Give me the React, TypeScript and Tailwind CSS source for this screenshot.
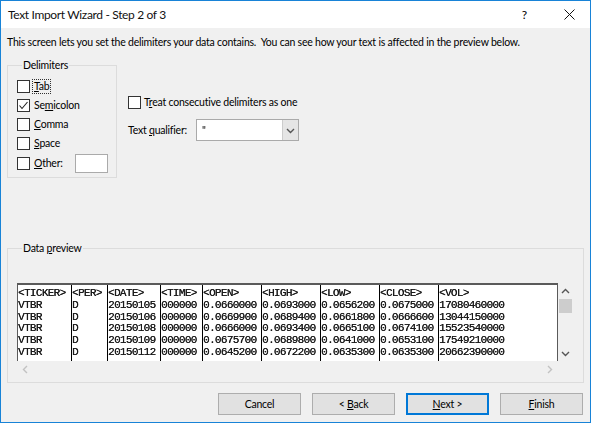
import React from "react";

const rows = [
  ["<TICKER>", "<PER>", "<DATE>", "<TIME>", "<OPEN>", "<HIGH>", "<LOW>", "<CLOSE>", "<VOL>"],
  ["VTBR", "D", "20150105", "000000", "0.0660000", "0.0693000", "0.0656200", "0.0675000", "17080460000"],
  ["VTBR", "D", "20150106", "000000", "0.0669900", "0.0689400", "0.0661800", "0.0666600", "13044150000"],
  ["VTBR", "D", "20150108", "000000", "0.0666000", "0.0693400", "0.0665100", "0.0674100", "15523540000"],
  ["VTBR", "D", "20150109", "000000", "0.0675700", "0.0689800", "0.0641000", "0.0653100", "17549210000"],
  ["VTBR", "D", "20150112", "000000", "0.0645200", "0.0672200", "0.0635300", "0.0635300", "20662390000"],
];

const colClasses = [
  "w-[53px]",
  "w-[36px]",
  "w-[53px]",
  "w-[42px]",
  "w-[59px]",
  "w-[59px]",
  "w-[59px]",
  "w-[59px]",
  "flex-1",
];

function Check({ checked = false }: { checked?: boolean }) {
  return (
    <span className="w-[13px] h-[13px] border border-[#333] bg-white flex items-center justify-center shrink-0">
      {checked && (
        <svg width="11" height="11" viewBox="0 0 11 11">
          <polyline points="1.5,5.5 4,8.5 9.5,2" fill="none" stroke="#222" strokeWidth="1.1" />
        </svg>
      )}
    </span>
  );
}

function Chevron({ dir, color }: { dir: "up" | "down" | "left" | "right"; color: string }) {
  const pts = {
    up: "1,6 4.5,2.5 8,6",
    down: "1,3 4.5,6.5 8,3",
    left: "6,1 2.5,4.5 6,8",
    right: "3,1 6.5,4.5 3,8",
  }[dir];
  return (
    <svg width="9" height="9" viewBox="0 0 9 9">
      <polyline points={pts} fill="none" stroke={color} strokeWidth="1.4" />
    </svg>
  );
}

function Btn({ children, primary = false }: { children: React.ReactNode; primary?: boolean }) {
  return (
    <button
      className={
        primary
          ? "w-[83px] h-[22px] bg-[#e1e1e1] border-2 border-[#0078d7] text-black flex items-center justify-center"
          : "w-[83px] h-[22px] bg-[#e1e1e1] border border-[#adadad] text-black flex items-center justify-center"
      }
    >
      <span className="whitespace-pre">{children}</span>
    </button>
  );
}

export default function App() {
  return (
    <div className="w-[591px] h-[423px] border border-[#1883d7] bg-[#f0f0f0] flex flex-col overflow-hidden font-['Lato','Noto_Sans',sans-serif] text-[10.5px] tracking-[-0.22px] text-black leading-[15px]">
      <div className="h-[27px] bg-white flex items-center pl-[7px] pr-[15px] shrink-0">
        <span className="text-[12px] tracking-[-0.35px] text-[#111]">Text Import Wizard - Step 2 of 3</span>
        <span className="ml-auto text-[12px] mr-[37px]">?</span>
        <svg width="11" height="11" viewBox="0 0 11 11">
          <path d="M0.5 0.5 L10.5 10.5 M10.5 0.5 L0.5 10.5" stroke="#111" strokeWidth="1" />
        </svg>
      </div>

      <p className="mt-[7px] ml-[6px] whitespace-nowrap">
        This screen lets you set the delimiters your data contains.&nbsp; You can see how your text is affected in the preview below.
      </p>

      <div className="flex mt-[8px] ml-[6px]">
        <fieldset className="w-[110px] h-[120px] border border-[#dcdcdc] pl-[9px] pt-[4px]">
          <legend className="ml-[5px] px-[1px]">Delimiters</legend>
          <div className="flex flex-col">
            <label className="h-[19px] flex items-center gap-[3px]">
              <Check />
              <span className="outline outline-1 outline-dotted outline-[#333] px-[1px] leading-[13px]">
                <u>T</u>ab
              </span>
            </label>
            <label className="h-[19px] flex items-center gap-[4px]">
              <Check checked />
              <span>
                Se<u>m</u>icolon
              </span>
            </label>
            <label className="h-[18px] flex items-center gap-[4px]">
              <Check />
              <span>
                <u>C</u>omma
              </span>
            </label>
            <label className="h-[20px] flex items-center gap-[4px]">
              <Check />
              <span>
                <u>S</u>pace
              </span>
            </label>
            <label className="h-[20px] flex items-center gap-[4px]">
              <Check />
              <span>
                <u>O</u>ther:
              </span>
              <span className="ml-auto mr-[8px] w-[33px] h-[19px] bg-white border border-[#aaa]" />
            </label>
          </div>
        </fieldset>

        <div className="ml-[11px] flex flex-col pt-[37px]">
          <label className="flex items-center gap-[3px] h-[14px]">
            <Check />
            <span>
              T<u>r</u>eat consecutive delimiters as one
            </span>
          </label>
          <div className="flex items-center mt-[10px]">
            <span className="w-[68px] whitespace-nowrap">
              Text <u>q</u>ualifier:
            </span>
            <div className="w-[103px] h-[22px] bg-white border border-[#aaa] flex">
              <span className="flex-1 pl-[5px] leading-[20px] [will-change:transform]">"</span>
              <span className="w-[16px] bg-[#e5e5e5] border-l border-[#ccc] flex items-center justify-center">
                <Chevron dir="down" color="#555" />
              </span>
            </div>
          </div>
        </div>
      </div>

      <fieldset className="mt-[63px] ml-[6px] w-[577px] h-[142px] border border-[#dcdcdc] pl-[9px] pt-[27px]">
        <legend className="ml-[5px] px-[1px]">
          Data <u>p</u>review
        </legend>
        <div className="w-[556px] flex flex-col">
          <div className="flex h-[78px]">
            <div className="w-[541px] bg-white border-t-2 border-l border-r border-[#5a5a5a] flex font-['Liberation_Mono',monospace] text-[11px] tracking-[-0.67px] leading-[11.8px] text-[#1a1a1a] overflow-hidden [will-change:transform] [text-shadow:0.2px_0_0_#1a1a1a]">
              {colClasses.map((c, ci) => (
                <div key={ci} className={`${c} border-l border-black first:border-l-0 pt-[3px] whitespace-pre`}>
                  {rows.map((r, ri) => (
                    <div key={ri}>{r[ci]}</div>
                  ))}
                </div>
              ))}
            </div>
            <div className="w-[15px] flex flex-col items-center">
              <div className="h-[16px] flex items-center justify-center">
                <Chevron dir="up" color="#555" />
              </div>
              <div className="w-[13px] h-[14px] bg-[#cdcdcd]" />
              <div className="flex-1" />
              <div className="h-[16px] flex items-center justify-center">
                <Chevron dir="down" color="#555" />
              </div>
            </div>
          </div>
          <div className="h-[16px] w-[541px] flex items-center justify-between px-[4px]">
            <Chevron dir="left" color="#c2c2c2" />
            <Chevron dir="right" color="#c2c2c2" />
          </div>
        </div>
      </fieldset>

      <div className="flex justify-end gap-[11px] mr-[7px] mt-[10px]">
        <Btn>Cancel</Btn>
        <Btn>
          &lt; <u>B</u>ack
        </Btn>
        <Btn primary>
          <u>N</u>ext &gt;
        </Btn>
        <Btn>
          <u>F</u>inish
        </Btn>
      </div>
    </div>
  );
}
